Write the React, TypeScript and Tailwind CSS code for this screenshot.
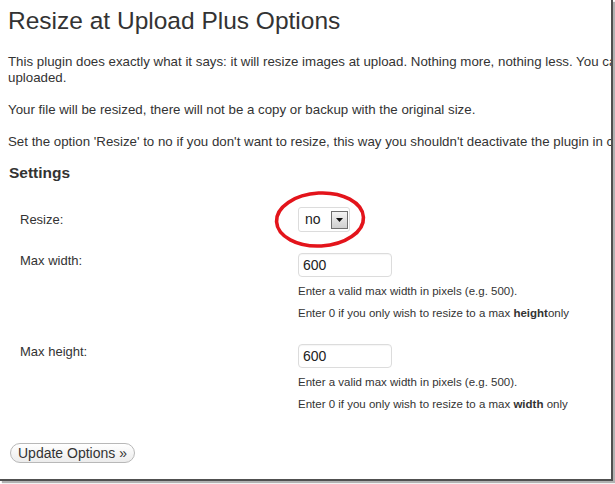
import React from "react";

const font = { fontFamily: '"Liberation Sans", Arial, sans-serif' };

function HelpText({ dim }: { dim: string }) {
  return (
    <div className="mt-[3px] text-[11.5px] leading-[22px] text-[#333]">
      <div className="whitespace-nowrap">Enter a valid max width in pixels (e.g. 500).</div>
      <div className="whitespace-nowrap">
        Enter 0 if you only wish to resize to a max <b>{dim}</b>
        {dim === "height" ? "only" : " only"}
      </div>
    </div>
  );
}

function TextInput({ value }: { value: string }) {
  return (
    <div className="flex h-[24px] w-[94px] items-center rounded-[4px] border border-[#dcdcdc] bg-white pl-[4px] text-[14px] text-[#222] shadow-[inset_0_1px_1px_rgba(0,0,0,0.04)]">
      {value}
    </div>
  );
}

export default function App() {
  return (
    <div className="h-[484px] w-[615px] bg-white" style={font}>
      <div className="relative h-[481px] w-[613px] overflow-hidden border-b-2 border-r-2 border-[#505050] bg-white shadow-[2px_2px_1px_rgba(0,0,0,0.3)]">
        <div className="pl-[8px] text-[#333]">
          <h2 className="mt-[6px] whitespace-nowrap text-[24.5px] leading-[30px] text-[#333]">
            Resize at Upload Plus Options
          </h2>
          <p className="mt-[18px] whitespace-nowrap text-[13.3px] leading-[16px]">
            This plugin does exactly what it says: it will resize images at upload. Nothing more, nothing less. You can set a max width and height for images that are
            <br />
            uploaded.
          </p>
          <p className="mt-[16px] whitespace-nowrap text-[13.3px] leading-[16px]">
            Your file will be resized, there will not be a copy or backup with the original size.
          </p>
          <p className="mt-[16px] whitespace-nowrap text-[13.3px] leading-[16px]">
            Set the option 'Resize' to no if you don't want to resize, this way you shouldn't deactivate the plugin in case you don't want it to resize for a while.
          </p>
          <h3 className="ml-[1px] mt-[14px] text-[15.5px] font-bold leading-[18px] text-[#333]">Settings</h3>
        </div>

        <div className="pl-[20px] text-[13px] text-[#333]">
          <div className="mt-[25px] flex items-start">
            <div className="w-[278px] pt-[5px] leading-[16px]">Resize:</div>
            <div className="flex h-[25px] w-[52px] items-center rounded-[3px] border border-[#dcdcdc] bg-white pl-[6px]">
              <span className="text-[14px] text-[#222]">no</span>
              <span className="ml-auto mr-[1px] flex h-[18px] w-[17px] items-center justify-center border border-[#6f6f6f] bg-gradient-to-b from-[#f4f4f4] to-[#cfcfcf]">
                <svg width="7" height="4" viewBox="0 0 7 4">
                  <path d="M0 0h7L3.5 4z" fill="#111" />
                </svg>
              </span>
            </div>
          </div>

          <div className="mt-[21px] flex items-start">
            <div className="w-[278px] leading-[16px]">Max width:</div>
            <div>
              <TextInput value="600" />
              <HelpText dim="height" />
            </div>
          </div>

          <div className="mt-[20px] flex items-start">
            <div className="w-[278px] leading-[16px]">Max height:</div>
            <div>
              <TextInput value="600" />
              <HelpText dim="width" />
            </div>
          </div>
        </div>

        <div className="pl-[10px]">
          <button className="mt-[28px] flex h-[20px] items-center rounded-full border border-[#b8b8b8] bg-gradient-to-b from-white to-[#ececec] px-[7px] text-[14px] text-[#333]">
            Update Options »
          </button>
        </div>

        <svg
          className="absolute left-[273px] top-[189px]"
          width="95"
          height="62"
          viewBox="0 0 95 62"
        >
          <ellipse
            cx="47"
            cy="30.5"
            rx="43.5"
            ry="26.5"
            fill="none"
            stroke="#e3141b"
            strokeWidth="3.6"
            transform="rotate(-3 47 30.5)"
          />
        </svg>
      </div>
    </div>
  );
}
